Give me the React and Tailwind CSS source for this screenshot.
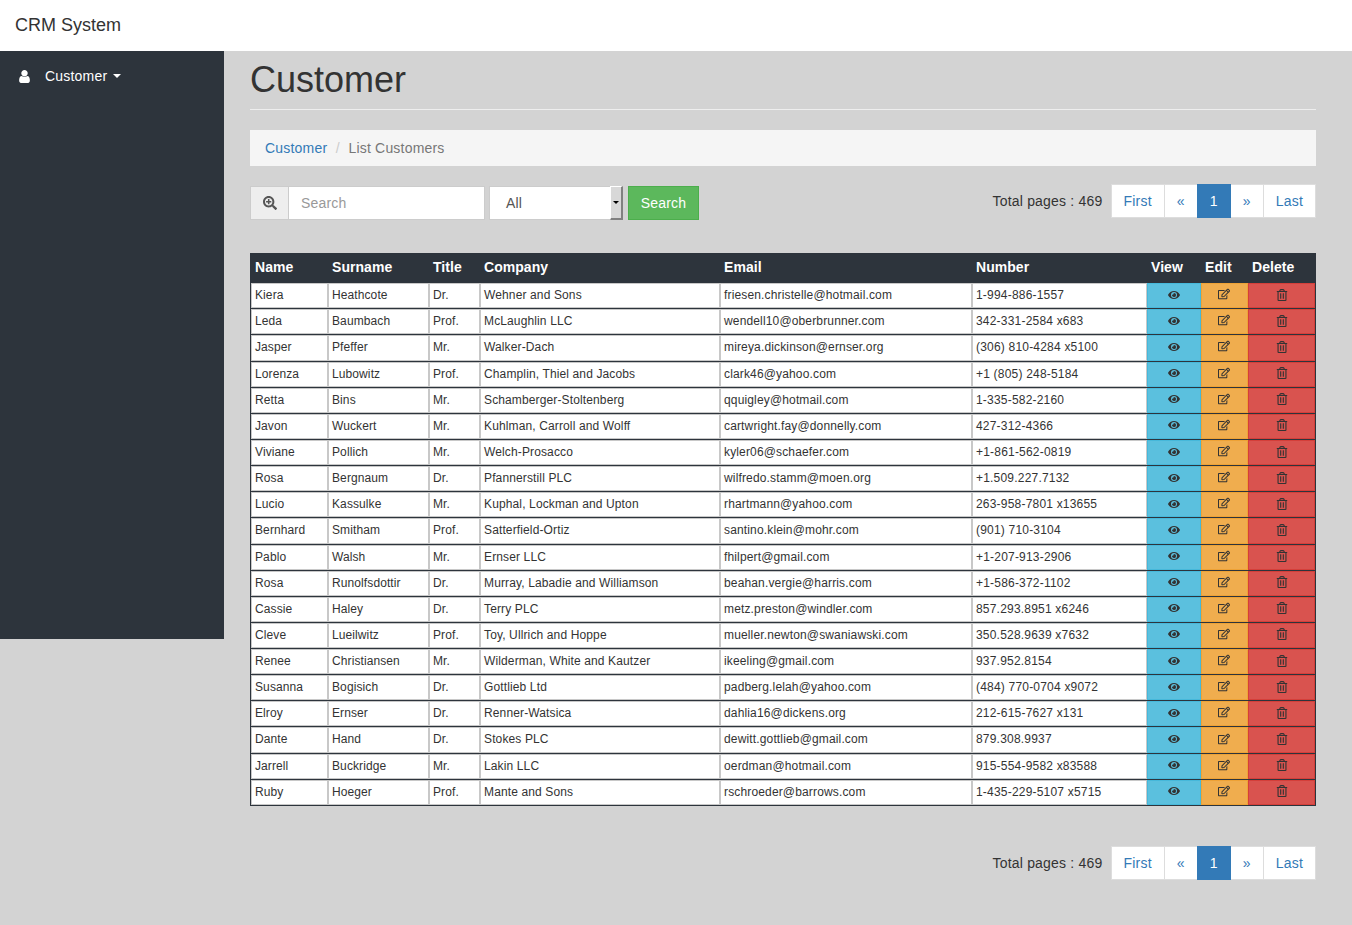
import { FaSearchPlus, FaEye, FaRegEdit, FaRegTrashAlt } from 'react-icons/fa';

const customers = [
  ['Kiera', 'Heathcote', 'Dr.', 'Wehner and Sons', 'friesen.christelle@hotmail.com', '1-994-886-1557'],
  ['Leda', 'Baumbach', 'Prof.', 'McLaughlin LLC', 'wendell10@oberbrunner.com', '342-331-2584 x683'],
  ['Jasper', 'Pfeffer', 'Mr.', 'Walker-Dach', 'mireya.dickinson@ernser.org', '(306) 810-4284 x5100'],
  ['Lorenza', 'Lubowitz', 'Prof.', 'Champlin, Thiel and Jacobs', 'clark46@yahoo.com', '+1 (805) 248-5184'],
  ['Retta', 'Bins', 'Mr.', 'Schamberger-Stoltenberg', 'qquigley@hotmail.com', '1-335-582-2160'],
  ['Javon', 'Wuckert', 'Mr.', 'Kuhlman, Carroll and Wolff', 'cartwright.fay@donnelly.com', '427-312-4366'],
  ['Viviane', 'Pollich', 'Mr.', 'Welch-Prosacco', 'kyler06@schaefer.com', '+1-861-562-0819'],
  ['Rosa', 'Bergnaum', 'Dr.', 'Pfannerstill PLC', 'wilfredo.stamm@moen.org', '+1.509.227.7132'],
  ['Lucio', 'Kassulke', 'Mr.', 'Kuphal, Lockman and Upton', 'rhartmann@yahoo.com', '263-958-7801 x13655'],
  ['Bernhard', 'Smitham', 'Prof.', 'Satterfield-Ortiz', 'santino.klein@mohr.com', '(901) 710-3104'],
  ['Pablo', 'Walsh', 'Mr.', 'Ernser LLC', 'fhilpert@gmail.com', '+1-207-913-2906'],
  ['Rosa', 'Runolfsdottir', 'Dr.', 'Murray, Labadie and Williamson', 'beahan.vergie@harris.com', '+1-586-372-1102'],
  ['Cassie', 'Haley', 'Dr.', 'Terry PLC', 'metz.preston@windler.com', '857.293.8951 x6246'],
  ['Cleve', 'Lueilwitz', 'Prof.', 'Toy, Ullrich and Hoppe', 'mueller.newton@swaniawski.com', '350.528.9639 x7632'],
  ['Renee', 'Christiansen', 'Mr.', 'Wilderman, White and Kautzer', 'ikeeling@gmail.com', '937.952.8154'],
  ['Susanna', 'Bogisich', 'Dr.', 'Gottlieb Ltd', 'padberg.lelah@yahoo.com', '(484) 770-0704 x9072'],
  ['Elroy', 'Ernser', 'Dr.', 'Renner-Watsica', 'dahlia16@dickens.org', '212-615-7627 x131'],
  ['Dante', 'Hand', 'Dr.', 'Stokes PLC', 'dewitt.gottlieb@gmail.com', '879.308.9937'],
  ['Jarrell', 'Buckridge', 'Mr.', 'Lakin LLC', 'oerdman@hotmail.com', '915-554-9582 x83588'],
  ['Ruby', 'Hoeger', 'Prof.', 'Mante and Sons', 'rschroeder@barrows.com', '1-435-229-5107 x5715'],
];

const columns = [
  ['Name', 'w-[77px]'],
  ['Surname', 'w-[101px]'],
  ['Title', 'w-[51px]'],
  ['Company', 'w-[240px]'],
  ['Email', 'w-[252px]'],
  ['Number', 'w-[175px]'],
  ['View', 'w-[54px]'],
  ['Edit', 'w-[47px]'],
  ['Delete', 'w-[67px]'],
];

const cellTracking = [
  'tracking-[0.1px]',
  'tracking-[0.1px]',
  'tracking-[0.1px]',
  'tracking-[0.13px]',
  'tracking-[0.15px]',
  'tracking-[0.2px]',
];

function UserIcon() {
  return (
    <svg viewBox="0 0 1792 1792" fill="currentColor" className="mr-[13px] h-[15px] w-[15px]">
      <path d="M1536 1399q0 109-62.5 187t-150.5 78h-854q-88 0-150.5-78t-62.5-187q0-85 8.5-160.5t31.5-152 58.5-131 94-89 134.5-34.5q131 128 313 128t313-128q76 0 134.5 34.5t94 89 58.5 131 31.5 152 8.5 160.5zm-256-887q0 159-112.5 271.5t-271.5 112.5-271.5-112.5-112.5-271.5 112.5-271.5 271.5-112.5 271.5 112.5 112.5 271.5z" />
    </svg>
  );
}

function Pagination() {
  const link = 'block -ml-px border border-[#ddd] bg-white px-3 py-1.5 text-[#337ab7]';
  return (
    <div className="flex items-center">
      <span className="mr-2 text-[#333]">Total pages : 469</span>
      <ul className="flex pl-px">
        <li><a className={link}>First</a></li>
        <li><a className={link}>«</a></li>
        <li><a className="relative block -ml-px border border-[#337ab7] bg-[#337ab7] px-3 py-1.5 text-white">1</a></li>
        <li><a className={link}>»</a></li>
        <li><a className={link}>Last</a></li>
      </ul>
    </div>
  );
}

export default function App() {
  return (
    <div className="min-h-screen bg-[#d3d3d3] font-['Liberation_Sans',Arial,sans-serif] text-sm leading-[1.42857143] tracking-[0.2px] text-[#333]">
      {/* Navbar */}
      <nav className="flex h-[51px] items-center bg-white pl-[15px]">
        <span className="text-[18px] tracking-normal text-[#333]">CRM System</span>
      </nav>

      <div className="flex items-start">
        {/* Sidebar */}
        <aside className="h-[588px] w-[224px] shrink-0 bg-[#2d343c]">
          <a className="flex items-center py-[15px] pl-[17px] text-white">
            <UserIcon />
            Customer
            <span className="ml-[6px] h-0 w-0 border-x-4 border-t-4 border-x-transparent border-t-white" />
          </a>
        </aside>

        {/* Content */}
        <main className="w-[1066px] ml-[26px]">
          <h1 className="mt-[9px] mb-5 border-b border-[#eee] pb-[9px] text-[36px] leading-[1.1] font-medium tracking-normal text-[#333]">
            Customer
          </h1>

          <ol className="mb-5 flex rounded-none bg-[#f5f5f5] px-[15px] py-2">
            <li className="text-[#337ab7]">Customer</li>
            <li className="px-[8.5px] text-[#ccc]">/</li>
            <li className="text-[#777]">List Customers</li>
          </ol>

          <div className="flex items-start justify-between">
            <form className="flex">
              <span className="flex h-[34px] w-[38px] items-center justify-center border border-r-0 border-[#ccc] bg-[#eee] text-[#555]">
                <FaSearchPlus size={14} />
              </span>
              <input
                placeholder="Search"
                className="h-[34px] w-[197px] border border-[#ccc] bg-white px-3 text-[#555] placeholder:text-[#999]"
              />
              <div className="ml-1 flex h-[34px] w-[134px] border border-[#ccc] bg-white pl-4 text-[#555]">
                <span className="flex-1 self-center">All</span>
                <span className="-my-px -mr-px flex w-[13px] items-center justify-center border-t border-l border-t-white border-l-white border-r-2 border-b-2 border-r-[#808080] border-b-[#808080] bg-[#d8d8d8]">
                  <span className="h-0 w-0 border-x-[3px] border-t-[3px] border-x-transparent border-t-black" />
                </span>
              </div>
              <button type="button" className="ml-[5px] h-[34px] w-[71px] border border-[#4cae4c] bg-[#5cb85c] text-center text-white">
                Search
              </button>
            </form>
            <div className="-mt-0.5">
              <Pagination />
            </div>
          </div>

          <table className="mt-[33.5px] w-[1066px] table-fixed border-separate border-x border-[#2d343c] bg-[#2d343c] [border-spacing:0_1px]">
            <thead>
              <tr>
                {columns.map(([label, width]) => (
                  <th key={label} className={`${width} px-1 pt-[3px] pb-[5px] text-left font-bold tracking-[0.05px] text-white`}>{label}</th>
                ))}
              </tr>
            </thead>
            <tbody className="text-xs leading-[1.42857143]">
              {customers.map((row, i) => (
                <tr key={i}>
                  {row.map((cell, j) => (
                    <td key={j} className={`${cellTracking[j]} border border-[#c8c8c8] bg-white p-[3px] whitespace-nowrap`}>{cell}</td>
                  ))}
                  <td className="border border-[#46b8da] bg-[#5bc0de] align-middle"><FaEye size={12} className="mx-auto -mt-[2px]" /></td>
                  <td className="border border-[#eea236] bg-[#f0ad4e] align-middle"><FaRegEdit size={12} className="mx-auto -mt-[3px] -translate-x-px" /></td>
                  <td className="border border-[#d43f3a] bg-[#d9534f] align-middle"><FaRegTrashAlt size={12} className="mx-auto -mt-[2px]" /></td>
                </tr>
              ))}
            </tbody>
          </table>

          <div className="mt-10 flex justify-end pb-[45px]">
            <Pagination />
          </div>
        </main>
      </div>
    </div>
  );
}
